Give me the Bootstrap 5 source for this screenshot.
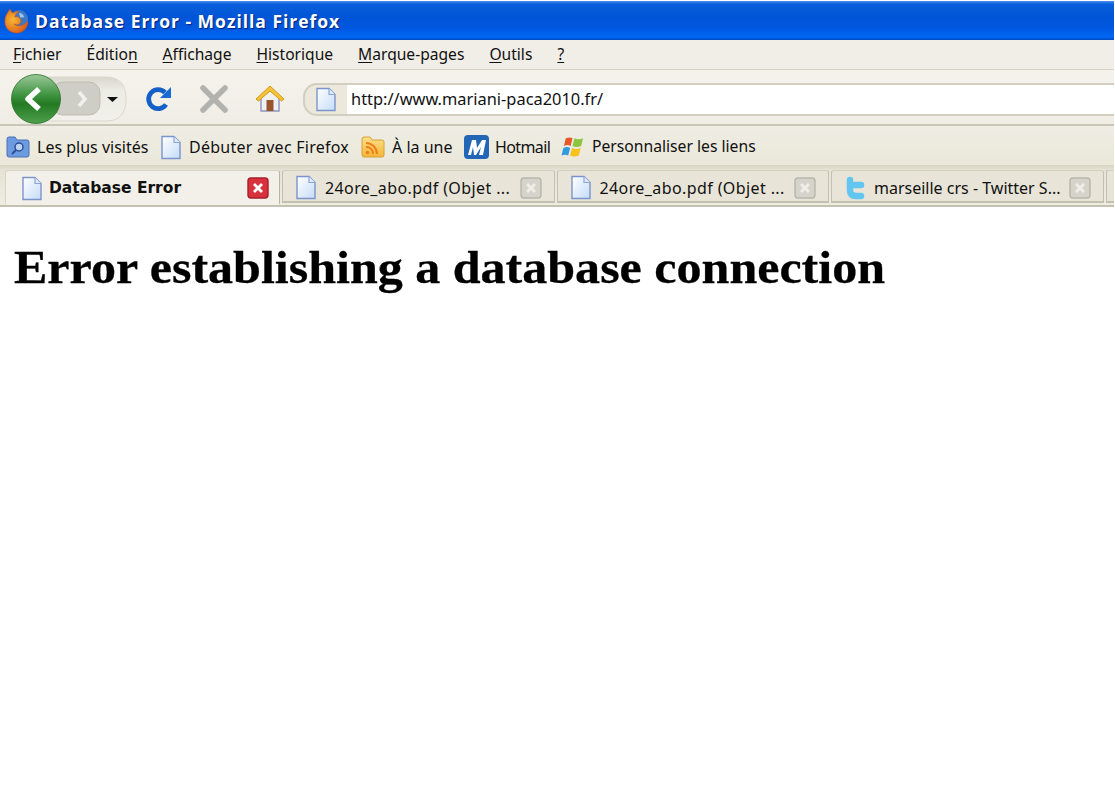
<!DOCTYPE html>
<html lang="fr">
<head>
    <meta charset="UTF-8">
    <title>Database Error - Mozilla Firefox</title>
    <link href="https://cdn.jsdelivr.net/npm/bootstrap@5.3.3/dist/css/bootstrap.min.css" rel="stylesheet">
    <style>
        html, body { background: #fff; height: 100%; overflow: hidden; }
        body { font-family: "Noto Sans", "DejaVu Sans", sans-serif; color: #111; padding-right: 1px; }
        .ff-title { height: 39px; margin-top: 1px; padding-left: 4px; gap: 5px; color: #fff; font: bold 17.5px "Open Sans", sans-serif; letter-spacing: .97px; text-shadow: 1px 1px 1px #02217f;
            background: linear-gradient(#4a90f0 0, #0a5fdb 8%, #0055d6 40%, #0058e0 70%, #0068f5 92%, #0048c0 100%); }
        .ff-menu { height: 30px; padding-left: 13px; gap: 25px; font-size: 15.6px; background: #f0eee6; border-bottom: 1px solid #d5d1c3; }
        .ff-menu u { text-underline-offset: 2px; }
        .ff-nav { height: 56px; padding: 4px 0 0 8px; background: linear-gradient(#f5f3ec, #efede4); border-bottom: 2px solid #cbc7b8; }
        .nav-pill { width: 120px; height: 50px; flex: none; }
        .nav-reload { width: 28px; height: 28px; flex: none; margin-left: 16px; }
        .nav-stop { width: 28px; height: 28px; flex: none; margin-left: 28px; }
        .nav-home { width: 30px; height: 28px; flex: none; margin-left: 27px; }
        .addr-bar { flex: 1; height: 33px; margin-left: 18px; border: 2px solid #d2cec0; border-right: 0; border-radius: 14px 0 0 14px; background: #ece9dc; overflow: hidden; }
        .addr-icon { width: 42px; flex: none; padding-left: 10px; }
        .addr-input { flex: 1; height: 100%; padding-left: 4px; background: #fff; font-size: 16.4px; color: #111; }
        .ff-marks { height: 39px; padding: 3px 0 0 6px; font-size: 16px; background: linear-gradient(#efede4, #ebe8da); grid-template-columns: 154px 201px 103px 97px auto; align-items: center; }
        .mark-item { gap: 7px; white-space: nowrap; }
        .mark-wide { letter-spacing: .25px; }
        .mark-tight { letter-spacing: -.6px; margin-left: -1px; }
        .mark-last { font-size: 15.7px; }
        .ff-tabs { height: 42px; padding-left: 5px; background: linear-gradient(#d8d5c5 0, #e6e3d5 5px, #efede2 100%); border-bottom: 2px solid #c5c1b0; }
        .tab-item { width: 272.5px; height: 33px; margin: 0 0 2px 2px; flex: none; padding: 3px 12px 0; gap: 8px; font-size: 16px; background: #e8e5d8; border: 1px solid #c4c0af; border-top-color: #d4d0c0; border-width: 1px 1px 2px 1px; border-radius: 3px 3px 0 0; white-space: nowrap; overflow: hidden; }
        .tab-active { width: 275px; height: 35px; margin: 0; padding: 2px 10px 0 15px; gap: 6px; background: #f2f0e9; border-color: #d8d4c6 #b8b4a3 #f2f0e9 #d8d4c6; font: bold 15.5px "DejaVu Sans", sans-serif; }
        .tab-label { flex: 1; overflow: hidden; }
        .label-pdf { letter-spacing: .4px; }
        .tab-end { flex: 1; height: 33px; margin: 0 0 2px 2px; background: #e8e5d8; border: 1px solid #c4c0af; border-top-color: #d4d0c0; border-width: 1px 0 2px 1px; }
        .err-head { width: fit-content; margin: 34px 0 0 14px; font: bold 46.5px "Liberation Serif", serif; -webkit-text-stroke: .3px #000; color: #000; white-space: nowrap; transform: scaleX(1.076); transform-origin: left center; }
    </style>
</head>
<body>

<svg width="0" height="0" class="position-absolute">
    <defs>
        <linearGradient id="pageFill" x1="0" y1="0" x2="1" y2="1">
            <stop offset="0" stop-color="#ffffff"/>
            <stop offset="1" stop-color="#c5dcf8"/>
        </linearGradient>
        <symbol id="pageIcon" viewBox="0 0 22 25">
            <path d="M2 1.500h12l6 6v16H2z" fill="url(#pageFill)" stroke="#7b94cc" stroke-width="1.400"/>
            <path d="M14 1.500v6h6" fill="#dfeafa" stroke="#8ba6d4" stroke-width="1.200"/>
        </symbol>
        <symbol id="closeGrey" viewBox="0 0 22 22">
            <rect x="1" y="1" width="20" height="20" rx="3" fill="#d6d4ca" stroke="#b8b6aa" stroke-width="1.400"/>
            <path d="M7 7l8 8M15 7l-8 8" stroke="#efeee8" stroke-width="2.800"/>
        </symbol>
    </defs>
</svg>

<div class="ff-title d-flex align-items-center">
    <svg width="26" height="26" viewBox="0 0 26 26">
        <defs>
            <radialGradient id="foxFill" cx=".35" cy=".45" r=".7">
                <stop offset="0" stop-color="#f7b733"/>
                <stop offset="1" stop-color="#d9531a"/>
            </radialGradient>
        </defs>
        <circle cx="15" cy="11" r="9" fill="#3f79c6"/>
        <path d="M15 5q4 0 5 4-2 1-4 0z" fill="#9cc4ea"/>
        <path d="M6 1c1 2 1 3 3 4 2-1 4-2 6-1-3 1-4 3-4 5 3-1 6 1 6 4s-4 5-7 3c3 3 9 3 14-3 0 7-5 12-11 12C5 25 0 19 1 12c0-4 3-8 5-11z" fill="url(#foxFill)" stroke="#c8501a" stroke-width=".6"/>
    </svg>
    <span>Database Error - Mozilla Firefox</span>
</div>

<div class="ff-menu d-flex align-items-center">
    <span><u>F</u>ichier</span>
    <span>Éditio<u>n</u></span>
    <span><u>A</u>ffichage</span>
    <span><u>H</u>istorique</span>
    <span><u>M</u>arque-pages</span>
    <span><u>O</u>utils</span>
    <span><u>?</u></span>
</div>

<div class="ff-nav d-flex align-items-center">
    <svg class="nav-pill" viewBox="0 0 120 50">
        <defs>
            <linearGradient id="backFill" x1="0" y1="0" x2="0" y2="1">
                <stop offset="0" stop-color="#9cc89a"/>
                <stop offset=".42" stop-color="#3f9440"/>
                <stop offset=".6" stop-color="#237a22"/>
                <stop offset="1" stop-color="#4fa04c"/>
            </linearGradient>
            <linearGradient id="pillFill" x1="0" y1="0" x2="0" y2="1">
                <stop offset="0" stop-color="#d9d7cd"/>
                <stop offset=".3" stop-color="#ecebe4"/>
                <stop offset="1" stop-color="#f1f0ea"/>
            </linearGradient>
        </defs>
        <path d="M28 3h70q20 0 20 22t-20 22H28z" fill="url(#pillFill)" stroke="#dcdacd"/>
        <rect x="44" y="8" width="48" height="33" rx="11" fill="#cfcec6" stroke="#bfbdb3"/>
        <path d="M71 18l6 7-6 7" fill="none" stroke="#f0f0ec" stroke-width="3.500"/>
        <path d="M99 23h11l-5.500 5z" fill="#111"/>
        <circle cx="28" cy="25" r="24.500" fill="url(#backFill)" stroke="#2b6e2b" stroke-width=".8"/>
        <path d="M31 15L20 25l11 10" fill="none" stroke="#fff" stroke-width="5.500" stroke-linejoin="round"/>
    </svg>
    <svg class="nav-reload" viewBox="0 0 28 28">
        <path d="M22 19.500a9.500 9.500 0 1 1-1-12" fill="none" stroke="#1460c8" stroke-width="4.800"/>
        <path d="M27 2v11H16z" fill="#1a6ad4"/>
    </svg>
    <svg class="nav-stop" viewBox="0 0 28 28">
        <path d="M3 3l22 22M25 3L3 25" stroke="#b2b2ae" stroke-width="5.500" stroke-linecap="round"/>
    </svg>
    <svg class="nav-home" viewBox="0 0 30 28">
        <path d="M6 13v13h18V13" fill="#eef0f6" stroke="#8f94bc" stroke-width="1.400"/>
        <path d="M1 14L15 1l14 13-2.500 2L15 6 3.500 16z" fill="#f6c238" stroke="#d09a18"/>
        <rect x="11.500" y="15" width="7" height="11" fill="#99562a"/>
    </svg>
    <div class="addr-bar d-flex align-items-center">
        <div class="addr-icon"><svg width="22" height="25" class="d-block"><use href="#pageIcon"/></svg></div>
        <div class="addr-input d-flex align-items-center">http://www.mariani-paca2010.fr/</div>
    </div>
</div>

<div class="ff-marks d-grid">
    <div class="mark-item d-flex align-items-center">
        <svg width="24" height="24" viewBox="0 0 24 24">
            <path d="M1 4q0-2 2-2h6l2 3h10q2 0 2 2v13q0 2-2 2H3q-2 0-2-2z" fill="#6d9be0" stroke="#4a70b5"/>
            <circle cx="13" cy="12" r="4" fill="#bcd3f4" stroke="#2c4f94" stroke-width="1.500"/>
            <path d="M10 15l-4 4" stroke="#2c4f94" stroke-width="2"/>
        </svg>
        <span>Les plus visités</span>
    </div>
    <div class="mark-item d-flex align-items-center">
        <svg width="22" height="25"><use href="#pageIcon"/></svg>
        <span class="mark-wide">Débuter avec Firefox</span>
    </div>
    <div class="mark-item d-flex align-items-center">
        <svg width="24" height="22" viewBox="0 0 24 22">
            <defs>
                <linearGradient id="rssFill" x1="0" y1="0" x2="0" y2="1">
                    <stop offset="0" stop-color="#fde08a"/>
                    <stop offset="1" stop-color="#f5b53a"/>
                </linearGradient>
            </defs>
            <path d="M1 3q0-2 2-2h6l2 3h10q2 0 2 2v13q0 2-2 2H3q-2 0-2-2z" fill="url(#rssFill)" stroke="#d6a234"/>
            <circle cx="6.500" cy="16.500" r="1.800" fill="#ee7f18"/>
            <path d="M5 11a6.500 6.500 0 0 1 7 7M5 7a11 11 0 0 1 11 11" fill="none" stroke="#ee7f18" stroke-width="2"/>
        </svg>
        <span>À la une</span>
    </div>
    <div class="mark-item d-flex align-items-center">
        <svg width="25" height="24" viewBox="0 0 25 24">
            <rect width="25" height="24" rx="4" fill="#2267b5"/>
            <path d="M4 20l4-15h4l1 8 5-8h4l-3 15h-4l2-8-5 8h-2l-1-8-2 8z" fill="#fff"/>
        </svg>
        <span class="mark-tight">Hotmail</span>
    </div>
    <div class="mark-item d-flex align-items-center">
        <svg width="24" height="23" viewBox="0 0 25 23">
            <path d="M5 3q4-2 7 0l-2 8q-3-2-7 0z" fill="#e8582a"/>
            <path d="M14 3q4 2 9 0l-2 8q-5 2-9 0z" fill="#8cc63f"/>
            <path d="M2.500 13q4-2 7 0l-2 8q-3-2-7 0z" fill="#2f9be0"/>
            <path d="M11.500 13q4 2 9 0l-2 8q-5 2-9 0z" fill="#f8c21c"/>
        </svg>
        <span class="mark-last">Personnaliser les liens</span>
    </div>
</div>

<div class="ff-tabs d-flex align-items-end">
    <div class="tab-item tab-active d-flex align-items-center">
        <svg width="22" height="25" class="flex-none"><use href="#pageIcon"/></svg>
        <span class="tab-label">Database Error</span>
        <svg width="22" height="22" viewBox="0 0 22 22">
            <rect x="1" y="1" width="20" height="20" rx="3" fill="#d8323c" stroke="#a81f2a" stroke-width="1.400"/>
            <path d="M7 7l8 8M15 7l-8 8" stroke="#fff" stroke-width="2.800"/>
        </svg>
    </div>
    <div class="tab-item d-flex align-items-center">
        <svg width="22" height="25"><use href="#pageIcon"/></svg>
        <span class="tab-label label-pdf">24ore_abo.pdf (Objet ...</span>
        <svg width="22" height="22"><use href="#closeGrey"/></svg>
    </div>
    <div class="tab-item d-flex align-items-center">
        <svg width="22" height="25"><use href="#pageIcon"/></svg>
        <span class="tab-label label-pdf">24ore_abo.pdf (Objet ...</span>
        <svg width="22" height="22"><use href="#closeGrey"/></svg>
    </div>
    <div class="tab-item d-flex align-items-center">
        <svg width="22" height="25" viewBox="0 0 22 25">
            <path d="M6 5v10q0 6 6 6h5M6 10h11" fill="none" stroke="#62c6f0" stroke-width="6.500" stroke-linecap="round"/>
        </svg>
        <span class="tab-label">marseille crs - Twitter S...</span>
        <svg width="22" height="22"><use href="#closeGrey"/></svg>
    </div>
    <div class="tab-end"></div>
</div>

<h1 class="err-head">Error establishing a database connection</h1>

<script src="https://cdn.jsdelivr.net/npm/bootstrap@5.3.3/dist/js/bootstrap.bundle.min.js"></script>
</body>
</html>
